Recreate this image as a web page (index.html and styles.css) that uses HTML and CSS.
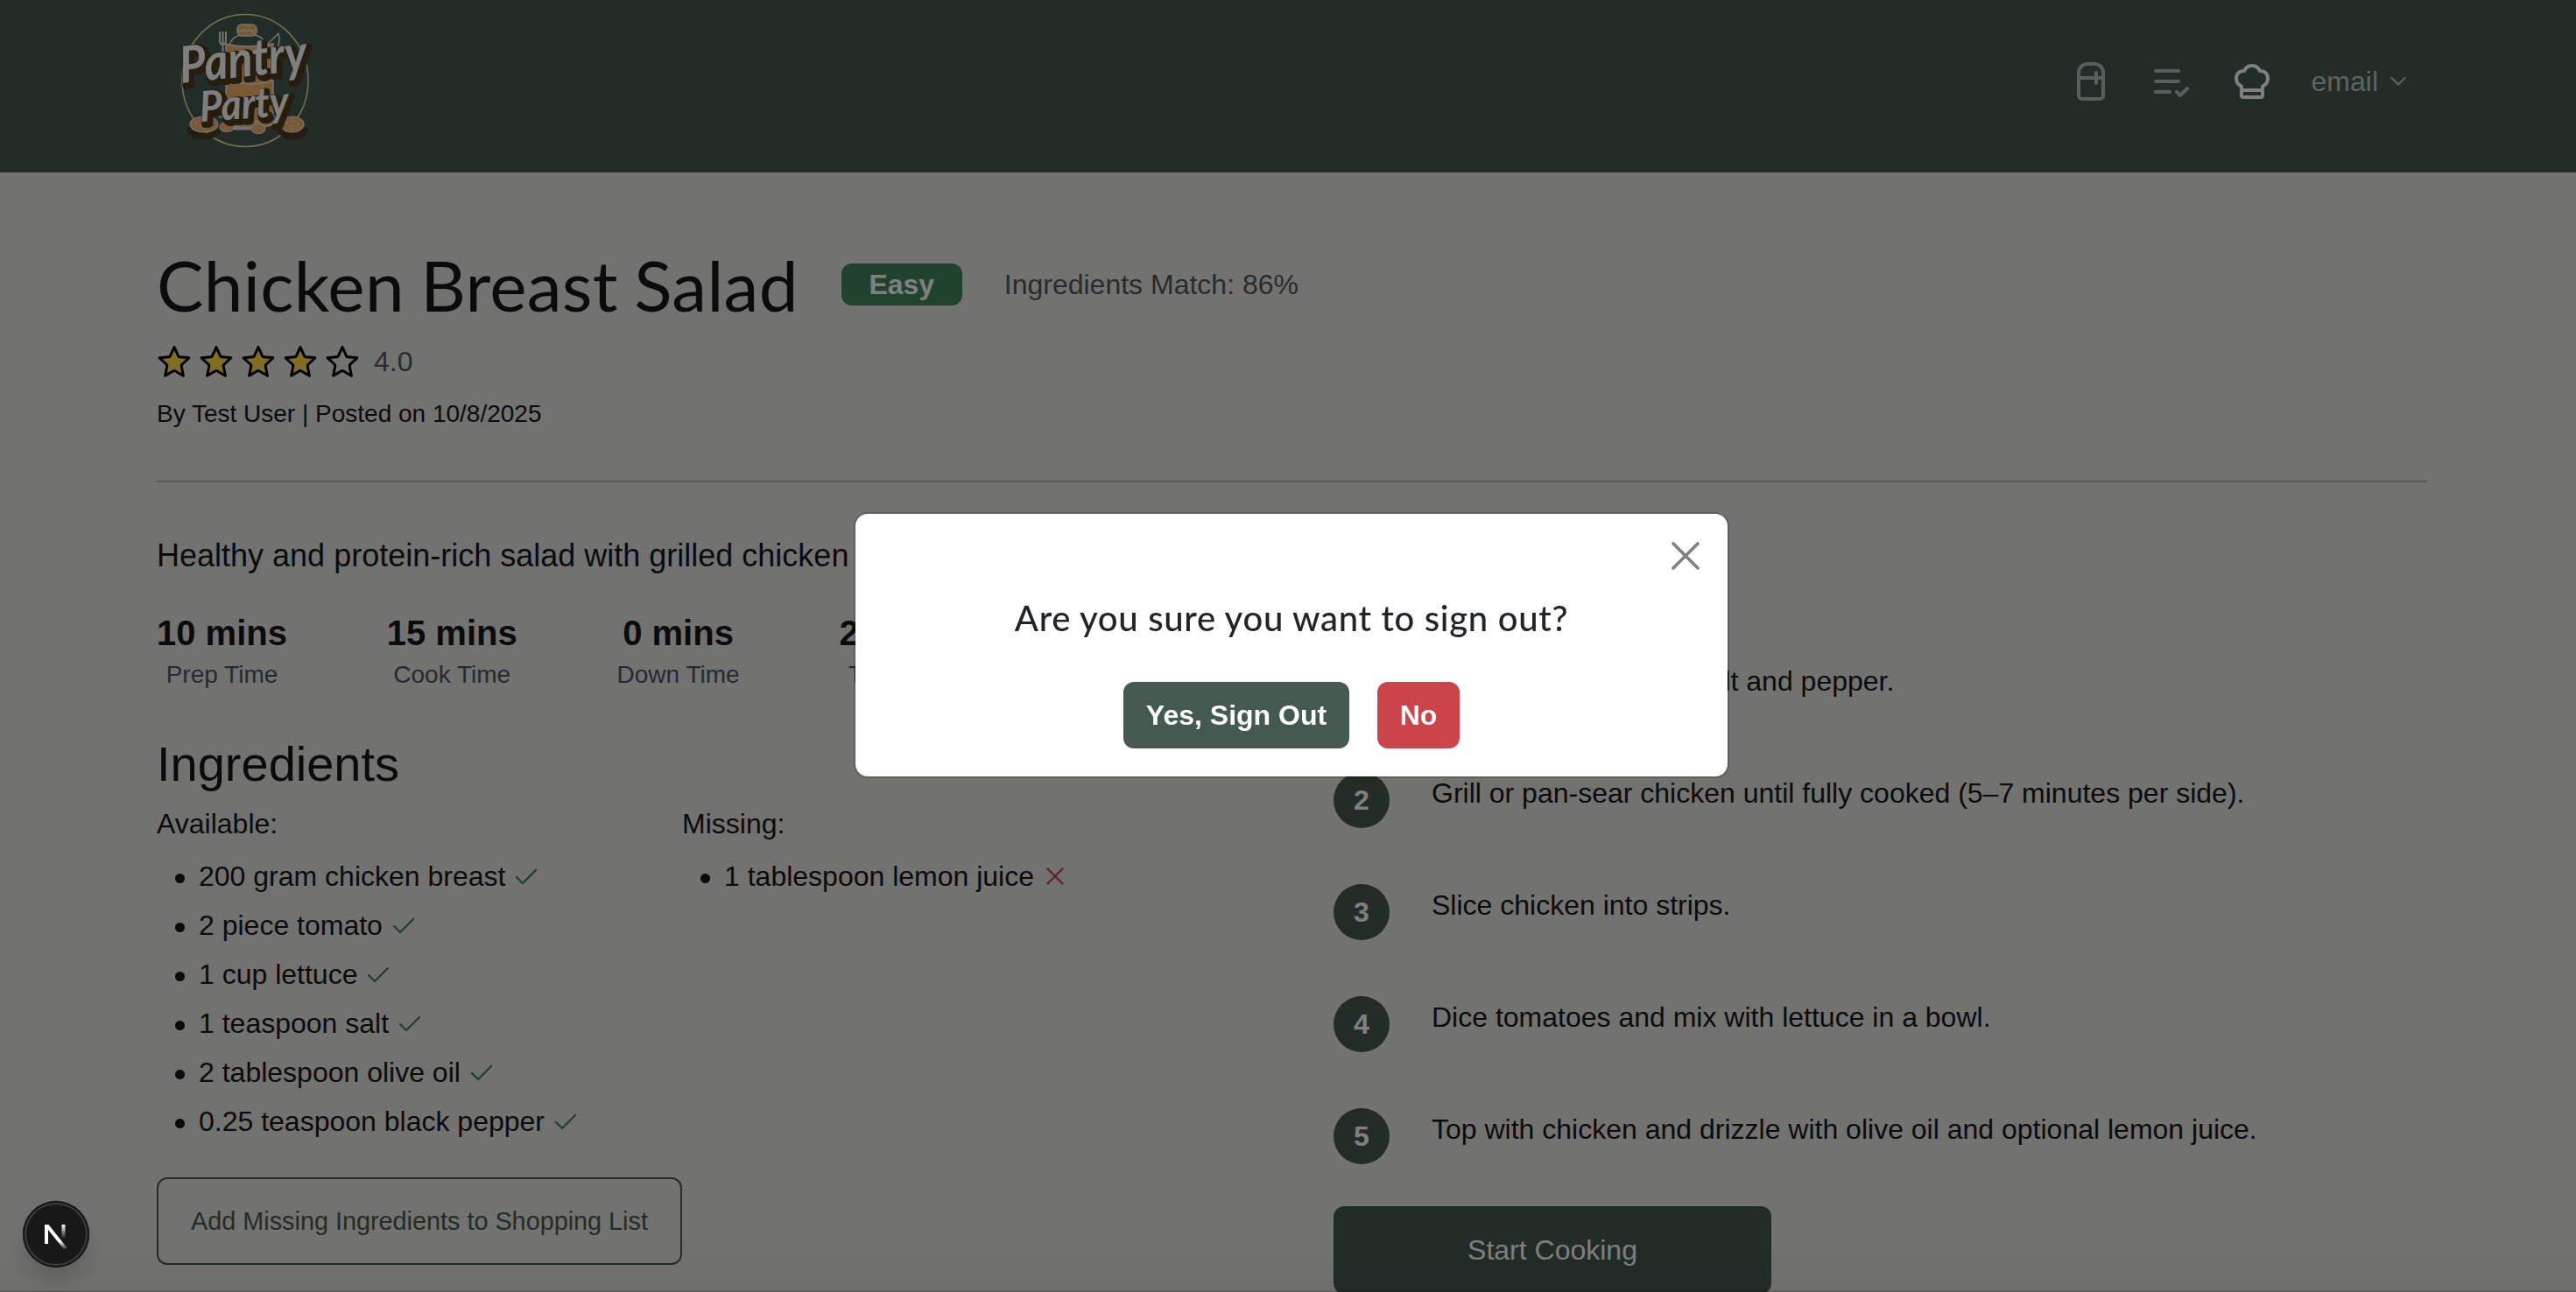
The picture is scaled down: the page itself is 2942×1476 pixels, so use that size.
FILE: index.html
```html
<!DOCTYPE html>
<html lang="en">
<head>
<meta charset="utf-8">
<title>Pantry Party</title>
<link rel="stylesheet" href="styles.css">
</head>
<body>
<svg class="defs" width="0" height="0">
  <symbol id="check" viewBox="0 0 28 22"><path d="M3 12l7 7L25 4" fill="none" stroke="currentColor" stroke-width="2.4" stroke-linecap="round" stroke-linejoin="round"/></symbol>
  <symbol id="star" viewBox="0 0 40 40"><path d="M20 3.600l4.700 10.200a1.600 1.600 0 0 0 1.300.9l10.900 1.100-8.200 7.700a1.700 1.700 0 0 0-.5 1.600l2.200 11.100-9.500-5.400a1.800 1.800 0 0 0-1.800 0l-9.500 5.400 2.200-11.100a1.700 1.700 0 0 0-.5-1.600l-8.200-7.700 10.900-1.100a1.600 1.600 0 0 0 1.300-.9z" stroke="#000" stroke-width="3" stroke-linejoin="round"/></symbol>
</svg>

<header class="navbar">
  <svg class="logo" viewBox="0 0 180 180" width="180" height="180">
    <ellipse cx="90" cy="88" rx="72" ry="75.500" fill="none" stroke="#f0e79c" stroke-width="1.500"/>
    <g stroke="#e8e8e4" stroke-width="1.500" fill="none">
      <path d="M72 50c1-9 7-14 15-14h12c8 0 14 6 15 14M114 48l14-14c3 8 0 16-4 24"/>
      <path fill="#f5b26b" d="M68 46c14 4 36 4 54 0v92c-12 5-42 5-54 0z"/>
      <path d="M68 88c16 5 38 5 54 0M60 129c18 9 46 9 64 0"/>
      <rect x="81" y="24" width="22" height="13" rx="5" fill="#f5b26b"/>
      <path d="M83 30l3 2 3-2 3 2 3-2 3 2 3-2"/>
      <path d="M61 32v11c0 5 7 5 7 0V32M64.500 32v28" stroke-width="2"/>
    </g>
    <path d="M27 142a16 9 0 0 0 32 2M130 144a14 9 0 0 0 28-2" stroke="#4c3a22" stroke-width="7" fill="none"/>
    <g fill="#f5b26b" stroke="#e8e8e4" stroke-width="1.200">
      <ellipse cx="43" cy="138" rx="16" ry="9"/>
      <ellipse cx="144" cy="138" rx="13" ry="9"/>
      <path d="M72 141h34v3H72z" fill="#e8e8e4"/>
      <ellipse cx="69" cy="141" rx="8" ry="5.500"/>
      <ellipse cx="105" cy="143" rx="8" ry="5.500"/>
    </g>
    <path d="M34 136h.1M39 140h.1M42 134h.1M47 138h.1M51 134h.1M43 143h.1M137 136h.1M142 140h.1M146 134h.1M151 138h.1M144 144h.1" stroke="#ffe9cc" stroke-width="1.800" stroke-linecap="round"/>
    <g class="logo-back">
      <text x="20" y="94" class="logo-top" textLength="146" lengthAdjust="spacingAndGlyphs" transform="rotate(-6 20 94)">Pantry</text>
      <text x="42" y="138" class="logo-bottom" textLength="102" lengthAdjust="spacingAndGlyphs" transform="rotate(-4 42 138)">Party</text>
    </g>
    <g class="logo-front" aria-hidden="true">
      <text x="17" y="91" class="logo-top" textLength="146" lengthAdjust="spacingAndGlyphs" transform="rotate(-6 17 91)">Pantry</text>
      <text x="39" y="135" class="logo-bottom" textLength="102" lengthAdjust="spacingAndGlyphs" transform="rotate(-4 39 135)">Party</text>
    </g>
  </svg>
  <nav class="nav">
    <svg class="dim" width="32" height="44" viewBox="0 0 32 44" fill="none" stroke="currentColor" stroke-width="4" stroke-linecap="round"><path d="M2 12a10 10 0 0 1 10-10h8a10 10 0 0 1 10 10v26a4 4 0 0 1-4 4H6a4 4 0 0 1-4-4zM2 18h28M22 12v12"/></svg>
    <svg class="dim list-icon" width="40" height="32" viewBox="0 0 40 32" fill="none" stroke="currentColor" stroke-width="4" stroke-linecap="round" stroke-linejoin="round"><path d="M2 2h26M2 14h26M2 26h16M26 26l4 4 8-8"/></svg>
    <svg class="hat" width="40" height="40" viewBox="0 0 40 40" fill="none" stroke="currentColor" stroke-width="4" stroke-linejoin="round"><path d="M8 36V25.500C4.500 24 2 20.500 2 16.500 2 11 6 7.500 11 8c2-4 5-6 9-6s7 2 9 6c5-.5 9 3 9 8.500 0 4-2.500 7.500-6 9V36a2 2 0 0 1-2 2H10a2 2 0 0 1-2-2zM8 30h24"/></svg>
    <div class="account">email<svg width="18" height="12" viewBox="0 0 18 12" fill="none" stroke="currentColor" stroke-width="2.200" stroke-linecap="round" stroke-linejoin="round"><path d="M1.500 2L9 9.500 16.500 2"/></svg></div>
  </nav>
</header>

<main class="page">
  <div class="title-row">
    <h1>Chicken Breast Salad</h1>
    <span class="badge">Easy</span>
    <span class="match">Ingredients Match: 86%</span>
  </div>
  <div class="rating">
    <svg class="on"><use href="#star"/></svg><svg class="on"><use href="#star"/></svg><svg class="on"><use href="#star"/></svg><svg class="on"><use href="#star"/></svg><svg class="off"><use href="#star"/></svg>
    <span>4.0</span>
  </div>
  <p class="byline">By Test User | Posted on 10/8/2025</p>
  <hr>
  <div class="columns">
    <section>
      <p class="desc">Healthy and protein-rich salad with grilled chicken breast.</p>
      <div class="times">
        <div><b>10 mins</b><span>Prep Time</span></div>
        <div><b>15 mins</b><span>Cook Time</span></div>
        <div><b>0 mins</b><span>Down Time</span></div>
        <div><b>25 mins</b><span>Total Time</span></div>
      </div>
      <h2>Ingredients</h2>
      <div class="stock">
        <div>
          <p>Available:</p>
          <ul>
            <li>200 gram chicken breast<svg class="ok"><use href="#check"/></svg></li>
            <li>2 piece tomato<svg class="ok"><use href="#check"/></svg></li>
            <li>1 cup lettuce<svg class="ok"><use href="#check"/></svg></li>
            <li>1 teaspoon salt<svg class="ok"><use href="#check"/></svg></li>
            <li>2 tablespoon olive oil<svg class="ok"><use href="#check"/></svg></li>
            <li>0.25 teaspoon black pepper<svg class="ok"><use href="#check"/></svg></li>
          </ul>
        </div>
        <div>
          <p>Missing:</p>
          <ul>
            <li>1 tablespoon lemon juice<svg class="no" viewBox="0 0 20 20"><path d="M1.500 1.500l17 17M18.500 1.500l-17 17" stroke="currentColor" stroke-width="2.400" stroke-linecap="round"/></svg></li>
          </ul>
        </div>
      </div>
      <button class="add">Add Missing Ingredients to Shopping List</button>
    </section>
    <section>
      <h2 class="steps-title">Instructions</h2>
      <ol class="steps">
        <li><b>1</b><span>Season chicken with salt and pepper.</span></li>
        <li><b>2</b><span>Grill or pan-sear chicken until fully cooked (5–7 minutes per side).</span></li>
        <li><b>3</b><span>Slice chicken into strips.</span></li>
        <li><b>4</b><span>Dice tomatoes and mix with lettuce in a bowl.</span></li>
        <li><b>5</b><span>Top with chicken and drizzle with olive oil and optional lemon juice.</span></li>
      </ol>
      <button class="start">Start Cooking</button>
    </section>
  </div>
</main>

<div class="backdrop"></div>
<div class="modal" role="dialog">
  <svg class="close" width="32" height="32" viewBox="0 0 32 32"><path d="M2 2l28 28M30 2L2 30" stroke="#808080" stroke-width="3.600" stroke-linecap="round"/></svg>
  <p class="question">Are you sure you want to sign out?</p>
  <div class="actions">
    <button class="yes">Yes, Sign Out</button>
    <button class="decline">No</button>
  </div>
</div>

<div class="dev-badge">
  <svg width="72" height="72" viewBox="0 0 72 72">
    <defs>
      <linearGradient id="diag" x1="0" y1="0" x2="0" y2="1"><stop offset=".65" stop-color="#fff"/><stop offset="1" stop-color="#fff" stop-opacity="0"/></linearGradient>
      <linearGradient id="stem" x1="0" y1="0" x2="0" y2="1"><stop stop-color="#fff"/><stop offset="1" stop-color="#fff" stop-opacity="0"/></linearGradient>
    </defs>
    <path d="M23 25h4v22h-4z" fill="#fff"/>
    <path d="M23 25h4.500l21 26.500-3 2.500L23 26z" fill="url(#diag)"/>
    <path d="M42.500 25h4v16h-4z" fill="url(#stem)"/>
  </svg>
</div>
</body>
</html>
```
FILE: styles.css
```css
* { box-sizing: border-box; margin: 0; padding: 0; }
body {
  width: 2942px;
  height: 1476px;
  overflow: hidden;
  background: #e4e4e0;
  color: #171717;
  font: 32px/48px "Liberation Sans", Arial, sans-serif;
}
svg { display: block; flex: none; }
button { font: inherit; }
.defs { position: absolute; }

.navbar {
  display: flex;
  justify-content: space-between;
  height: 197px;
  padding: 4px 194px 0 190px;
  background: #445a50;
}
.logo { overflow: visible; }
.logo-top, .logo-bottom { font-family: Lato, sans-serif; font-style: italic; font-weight: 700; }
.logo-top { font-size: 58px; }
.logo-bottom { font-size: 48px; }
.logo-back { fill: #4c3a22; stroke: #4c3a22; stroke-width: 8; stroke-linejoin: round; }
.logo-front { fill: #fff; }

.nav { display: flex; align-items: center; height: 178px; }
.dim { color: #fff; opacity: .6; }
.hat { color: #fff; margin-left: 52px; }
.list-icon { margin-left: 56px; margin-top: 4px; }
.account { display: flex; align-items: center; gap: 14px; margin-left: 48px; color: #fff; opacity: .65; }

.page { padding: 80px 170px 0 179px; }
.title-row { display: flex; align-items: center; height: 96px; }
h1 { font: 400 80px/96px Lato, sans-serif; letter-spacing: .3px; word-spacing: -2.3px; white-space: nowrap; }
.badge {
  width: 138px;
  height: 48px;
  margin-left: 49px;
  border-radius: 12px;
  background: #42845a;
  color: #fff;
  font-weight: 700;
  text-align: center;
}
.match { margin-left: 48px; color: rgba(33, 37, 41, .75); }
.rating { display: flex; align-items: center; gap: 8px; height: 48px; margin-top: 16px; color: rgba(33, 37, 41, .75); }
.rating svg { width: 40px; height: 40px; margin-top: -1px; }
.rating span { margin-left: 8px; }
.on { fill: #fddc42; }
.off { fill: none; }
.byline { margin-top: 15px; font-size: 28px; line-height: 42px; }
hr { height: 2px; margin: 55px 0 57px; border: 0; background: #b2b2af; }

.columns { display: grid; grid-template-columns: 1344px 1fr; }
.desc { font-size: 36px; line-height: 54px; }
.times { display: flex; gap: 113.8px; margin-top: 37px; }
.times div { display: flex; flex-direction: column; align-items: center; gap: 3px; }
.times b { font-size: 40px; }
.times span { color: #4a5565; font-size: 28px; line-height: 42px; }
h2 { margin-top: 47px; font-size: 56px; font-weight: 400; line-height: 68px; }
.stock { display: grid; grid-template-columns: 600px 600px; margin-top: 10px; }
ul, ol { list-style: none; }
ul { margin-top: 8px; }
li { display: flex; }
ul li { align-items: center; height: 56px; padding-left: 48px; }
ul li::before { content: ""; width: 11px; height: 11px; margin: 5px 16px 0 -27px; border-radius: 50%; background: #171717; }
.ok { width: 28px; height: 22px; margin-left: 10px; color: #42845a; }
.no { width: 20px; height: 20px; margin-left: 14px; color: #cb444a; }
.add {
  width: 600px;
  height: 100px;
  margin-top: 36px;
  border: 2px solid #445a50;
  border-radius: 12px;
  background: none;
  color: #445a50;
  font-size: 28.8px;
}
.steps-title { margin: 0 0 78px; }
.steps { display: grid; gap: 64px; }
.steps li { height: 64px; gap: 48px; }
.steps b { width: 64px; height: 64px; border-radius: 50%; background: #445a50; color: #fff; line-height: 64px; text-align: center; }
.start { display: block; width: 500px; height: 100px; margin-top: 48px; border: 0; border-radius: 12px; background: #445a50; color: #fff; }

.backdrop { position: fixed; inset: 0; background: linear-gradient(transparent 1416px, rgba(0, 0, 0, .03) 1474px, rgba(0, 0, 0, .2) 1475px), rgba(0, 0, 0, .5); }
.modal {
  position: fixed;
  top: 585px;
  left: 975px;
  display: flex;
  flex-direction: column;
  align-items: center;
  width: 1000px;
  height: 304px;
  padding-top: 32px;
  border: 2px solid rgba(0, 0, 0, .175);
  border-radius: 16px;
  background: #fff;
  background-clip: padding-box;
}
.close { align-self: flex-end; margin-right: 32px; }
.question { margin-top: 31px; color: #212529; font: 500 40px/48px Lato, sans-serif; letter-spacing: .7px; white-space: nowrap; }
.actions { display: flex; gap: 32px; margin-top: 49px; }
.actions button { height: 76px; border: 0; border-radius: 12px; color: #fff; font-weight: 700; }
.yes { width: 258px; background: #445a50; }
.decline { width: 94px; background: #cb444a; }

.dev-badge {
  position: fixed;
  top: 1372px;
  left: 26px;
  width: 76px;
  height: 76px;
  padding: 2px;
  border-radius: 50%;
  background: #181818;
  box-shadow: inset 0 0 0 2px #161616, inset 0 0 0 4px #3c3c3c, 0 16px 32px -8px rgba(0, 0, 0, .24);
}
```
